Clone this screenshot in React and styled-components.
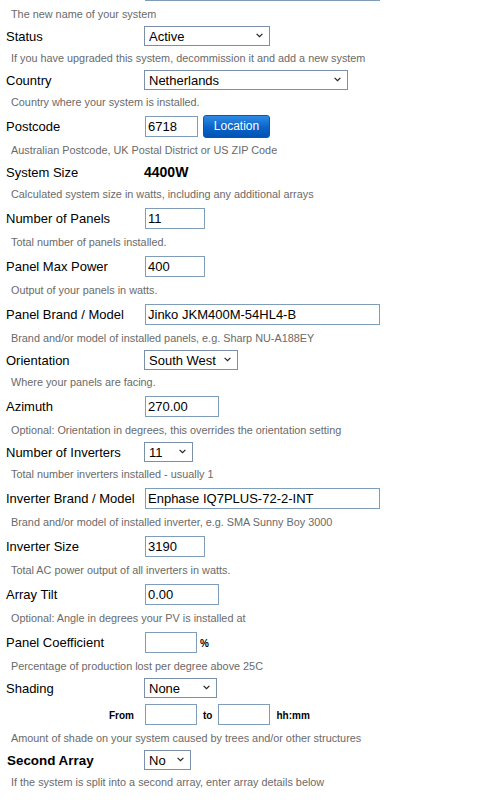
import React from 'react'
import styled, { createGlobalStyle } from 'styled-components'

const GlobalStyle = createGlobalStyle`
  html, body {
    margin: 0;
    padding: 0;
    background: #fff;
  }
  body {
    font-family: "Liberation Sans", Arial, sans-serif;
    color: #000;
    overflow: hidden;
  }
`

const FormWrapper = styled.div`
  margin-top: -24px;
  padding: 0 6px;
  width: 480px;
`

const Row = styled.div`
  display: grid;
  grid-template-columns: 138px 1fr;
  align-items: center;
  height: ${(p) => p.$h || 24}px;
`

const Label = styled.div`
  font-size: ${(p) => (p.$strong ? '13.4px' : '13px')};
  font-weight: ${(p) => (p.$strong ? 'bold' : 'normal')};
  padding-left: ${(p) => (p.$strong ? '1px' : '0')};
  line-height: 15px;
  white-space: nowrap;
`

const SubLabel = styled.div`
  font-size: 10px;
  font-weight: bold;
  text-align: right;
  padding-right: 10px;
  padding-top: 3px;
`

const Controls = styled.div`
  display: flex;
  align-items: center;
`

const TextInput = styled.input`
  box-sizing: border-box;
  width: ${(p) => p.$w}px;
  height: 21px;
  margin: 0 0 0 1px;
  padding: 0 2px;
  border: 1px solid #7f9db9;
  border-radius: 0;
  background: #fff;
  font-family: "Liberation Sans", Arial, sans-serif;
  font-size: 13px;
  color: #000;
  outline: none;
`

const SelectWrap = styled.div`
  position: relative;
  display: inline-flex;
`

const Select = styled.select`
  appearance: none;
  -webkit-appearance: none;
  box-sizing: border-box;
  width: ${(p) => p.$w}px;
  height: 20px;
  margin: 0;
  padding: 0 18px 0 4px;
  border: 1px solid #7a8fa8;
  border-radius: 0;
  background: #fff;
  font-family: "Liberation Sans", Arial, sans-serif;
  font-size: 13px;
  color: #000;
  outline: none;
`

const Chevron = styled.svg`
  position: absolute;
  right: 7px;
  top: 7px;
  width: 7px;
  height: 5px;
  pointer-events: none;
`

const Hint = styled.div`
  height: 20px;
  display: flex;
  align-items: center;
  padding-left: 5px;
  font-size: 10.85px;
  color: #6a6a6a;
  white-space: nowrap;
`

const Value = styled.div`
  font-size: 14px;
  font-weight: bold;
`

const Unit = styled.span`
  font-size: 10px;
  font-weight: bold;
  margin: ${(p) => p.$m || '3px 0 0 3px'};
`

const LocationButton = styled.button`
  box-sizing: border-box;
  width: 67px;
  height: 23px;
  margin-left: 5px;
  padding: 0;
  border: 1px solid #0b56a8;
  border-radius: 3px;
  background: linear-gradient(#2f8be4, #0a63c9 55%, #0054b4);
  color: #fff;
  font-family: "Liberation Sans", Arial, sans-serif;
  font-size: 12px;
  cursor: pointer;
`

function Dropdown({ width, value, options }) {
  return (
    <SelectWrap>
      <Select $w={width} defaultValue={value}>
        {options.map((o) => (
          <option key={o}>{o}</option>
        ))}
      </Select>
      <Chevron viewBox="0 0 7 5">
        <path d="M0.6 0.8 L3.5 3.7 L6.4 0.8" fill="none" stroke="#222" strokeWidth="1.2" />
      </Chevron>
    </SelectWrap>
  )
}

function InputField({ label, value, width, hint }) {
  return (
    <>
      <Row $h={28}>
        <Label>{label}</Label>
        <Controls>
          <TextInput $w={width} defaultValue={value} />
        </Controls>
      </Row>
      <Hint>{hint}</Hint>
    </>
  )
}

function SelectField({ label, strong, value, width, options, hint }) {
  return (
    <>
      <Row>
        <Label $strong={strong}>{label}</Label>
        <Controls>
          <Dropdown width={width} value={value} options={options} />
        </Controls>
      </Row>
      <Hint>{hint}</Hint>
    </>
  )
}

export default function App() {
  return (
    <>
      <GlobalStyle />
      <FormWrapper>
        {/* system name row, scrolled mostly out of view */}
        <InputField label="" value="" width={235} hint="The new name of your system" />
        <SelectField
          label="Status"
          value="Active"
          width={126}
          options={['Active', 'Decommissioned']}
          hint="If you have upgraded this system, decommission it and add a new system"
        />
        <SelectField
          label="Country"
          value="Netherlands"
          width={204}
          options={['Australia', 'Netherlands', 'United Kingdom', 'United States']}
          hint="Country where your system is installed."
        />

        <Row $h={28}>
          <Label>Postcode</Label>
          <Controls>
            <TextInput $w={53} defaultValue="6718" />
            <LocationButton>Location</LocationButton>
          </Controls>
        </Row>
        <Hint>Australian Postcode, UK Postal District or US ZIP Code</Hint>

        <Row>
          <Label>System Size</Label>
          <Value>4400W</Value>
        </Row>
        <Hint>Calculated system size in watts, including any additional arrays</Hint>

        <InputField label="Number of Panels" value="11" width={60} hint="Total number of panels installed." />
        <InputField label="Panel Max Power" value="400" width={60} hint="Output of your panels in watts." />
        <InputField
          label="Panel Brand / Model"
          value="Jinko JKM400M-54HL4-B"
          width={235}
          hint="Brand and/or model of installed panels, e.g. Sharp NU-A188EY"
        />
        <SelectField
          label="Orientation"
          value="South West"
          width={94}
          options={['North', 'North East', 'East', 'South East', 'South', 'South West', 'West', 'North West']}
          hint="Where your panels are facing."
        />
        <InputField
          label="Azimuth"
          value="270.00"
          width={74}
          hint="Optional: Orientation in degrees, this overrides the orientation setting"
        />
        <SelectField
          label="Number of Inverters"
          value="11"
          width={49}
          options={['1', '2', '3', '4', '5', '6', '7', '8', '9', '10', '11', '12']}
          hint="Total number inverters installed - usually 1"
        />
        <InputField
          label="Inverter Brand / Model"
          value="Enphase IQ7PLUS-72-2-INT"
          width={235}
          hint="Brand and/or model of installed inverter, e.g. SMA Sunny Boy 3000"
        />
        <InputField label="Inverter Size" value="3190" width={60} hint="Total AC power output of all inverters in watts." />
        <InputField label="Array Tilt" value="0.00" width={74} hint="Optional: Angle in degrees your PV is installed at" />

        <Row $h={28}>
          <Label>Panel Coefficient</Label>
          <Controls>
            <TextInput $w={52} defaultValue="" />
            <Unit>%</Unit>
          </Controls>
        </Row>
        <Hint>Percentage of production lost per degree above 25C</Hint>

        <Row>
          <Label>Shading</Label>
          <Controls>
            <Dropdown width={73} value="None" options={['None', 'Low', 'Medium', 'High']} />
          </Controls>
        </Row>
        <Row $h={28}>
          <SubLabel>From</SubLabel>
          <Controls>
            <TextInput $w={52} defaultValue="" />
            <Unit $m="3px 5px 0 6px">to</Unit>
            <TextInput $w={52} defaultValue="" />
            <Unit $m="3px 0 0 6px">hh:mm</Unit>
          </Controls>
        </Row>
        <Hint>Amount of shade on your system caused by trees and/or other structures</Hint>

        <SelectField
          label="Second Array"
          strong
          value="No"
          width={47}
          options={['No', 'Yes']}
          hint="If the system is split into a second array, enter array details below"
        />
      </FormWrapper>
    </>
  )
}
